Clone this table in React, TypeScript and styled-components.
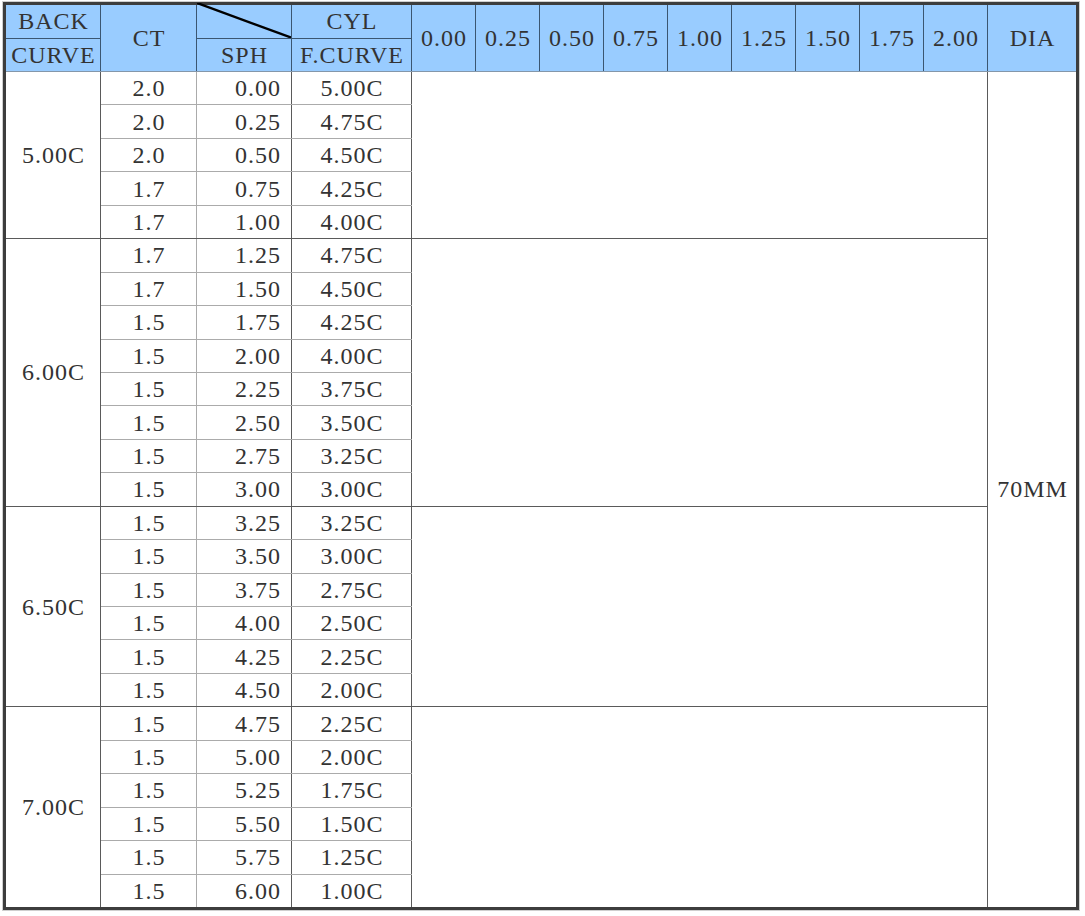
import React from "react";
import styled, { createGlobalStyle } from "styled-components";

const Global = createGlobalStyle`
  html, body { margin: 0; padding: 0; background: #ffffff; }
  body { font-family: "Liberation Serif", "Times New Roman", serif; color: #333; }
`;

const Frame = styled.div`
  display: inline-block;
  margin: 1px 0 0 2px;
  border: 1px solid #cfcfcf;
`;

const Table = styled.table`
  border-collapse: collapse;
  table-layout: fixed;
  border: 3px solid #3d3d3d;
  font-family: "Liberation Serif", "Times New Roman", serif;
  font-size: 24px;
  letter-spacing: 1px;
  color: #333;
  width: 1076px;
`;

const HeadCell = styled.th<{ $split?: boolean; $last?: boolean }>`
  background: #99ccff;
  font-weight: normal;
  padding: 0 0 0 1px;
  height: 32.5px;
  line-height: 26px;
  text-align: center;
  white-space: nowrap;
  border-right: ${(p) => (p.$last ? "none" : "1px solid #3b5671")};
  border-bottom: 1px solid ${(p) => (p.$split ? "#3b5671" : "#8497aa")};
  border-top: none;
  border-left: none;
  position: relative;
`;

const DiagonalSvg = styled.svg`
  position: absolute;
  left: 0;
  top: -2px;
  width: 100%;
  height: calc(100% + 2px);
  display: block;
`;

const Cell = styled.td<{
  $align?: "left" | "center" | "right";
  $right?: "dark" | "light" | "none";
  $bottom?: "dark" | "light" | "none";
}>`
  padding: 0 ${(p) => (p.$align === "right" ? "10px" : "0")} 0 ${(p) => (p.$align === "right" ? "0" : "1px")};
  height: 32.44px;
  line-height: 26px;
  text-align: ${(p) => p.$align ?? "center"};
  vertical-align: middle;
  white-space: nowrap;
  background: #ffffff;
  border-top: none;
  border-left: none;
  border-right: ${(p) =>
    p.$right === "none" ? "none" : p.$right === "light" ? "1px solid #ababab" : "1px solid #5a5a5a"};
  border-bottom: ${(p) =>
    p.$bottom === "none" ? "none" : p.$bottom === "light" ? "1px solid #ababab" : "1px solid #5a5a5a"};
`;

type Row = { ct: string; sph: string; fc: string };
type Group = { curve: string; rows: Row[] };

const groups: Group[] = [
  {
    curve: "5.00C",
    rows: [
      { ct: "2.0", sph: "0.00", fc: "5.00C" },
      { ct: "2.0", sph: "0.25", fc: "4.75C" },
      { ct: "2.0", sph: "0.50", fc: "4.50C" },
      { ct: "1.7", sph: "0.75", fc: "4.25C" },
      { ct: "1.7", sph: "1.00", fc: "4.00C" },
    ],
  },
  {
    curve: "6.00C",
    rows: [
      { ct: "1.7", sph: "1.25", fc: "4.75C" },
      { ct: "1.7", sph: "1.50", fc: "4.50C" },
      { ct: "1.5", sph: "1.75", fc: "4.25C" },
      { ct: "1.5", sph: "2.00", fc: "4.00C" },
      { ct: "1.5", sph: "2.25", fc: "3.75C" },
      { ct: "1.5", sph: "2.50", fc: "3.50C" },
      { ct: "1.5", sph: "2.75", fc: "3.25C" },
      { ct: "1.5", sph: "3.00", fc: "3.00C" },
    ],
  },
  {
    curve: "6.50C",
    rows: [
      { ct: "1.5", sph: "3.25", fc: "3.25C" },
      { ct: "1.5", sph: "3.50", fc: "3.00C" },
      { ct: "1.5", sph: "3.75", fc: "2.75C" },
      { ct: "1.5", sph: "4.00", fc: "2.50C" },
      { ct: "1.5", sph: "4.25", fc: "2.25C" },
      { ct: "1.5", sph: "4.50", fc: "2.00C" },
    ],
  },
  {
    curve: "7.00C",
    rows: [
      { ct: "1.5", sph: "4.75", fc: "2.25C" },
      { ct: "1.5", sph: "5.00", fc: "2.00C" },
      { ct: "1.5", sph: "5.25", fc: "1.75C" },
      { ct: "1.5", sph: "5.50", fc: "1.50C" },
      { ct: "1.5", sph: "5.75", fc: "1.25C" },
      { ct: "1.5", sph: "6.00", fc: "1.00C" },
    ],
  },
];

const cyls = ["0.00", "0.25", "0.50", "0.75", "1.00", "1.25", "1.50", "1.75", "2.00"];
const totalRows = groups.reduce((n, g) => n + g.rows.length, 0);

export default function App() {
  return (
    <>
      <Global />
      <Frame>
        <Table>
          <colgroup>
            <col style={{ width: 96 }} />
            <col style={{ width: 96 }} />
            <col style={{ width: 95 }} />
            <col style={{ width: 120 }} />
            {cyls.map((c) => (
              <col key={c} style={{ width: 64 }} />
            ))}
            <col style={{ width: 90 }} />
          </colgroup>
          <thead>
            <tr>
              <HeadCell $split>BACK</HeadCell>
              <HeadCell rowSpan={2}>CT</HeadCell>
              <HeadCell $split>
                <DiagonalSvg viewBox="0 0 100 100" preserveAspectRatio="none">
                  <line x1="0" y1="0" x2="100" y2="100" stroke="#000" strokeWidth="2.4" vectorEffect="non-scaling-stroke" />
                </DiagonalSvg>
                &nbsp;
              </HeadCell>
              <HeadCell $split>CYL</HeadCell>
              {cyls.map((c) => (
                <HeadCell key={c} rowSpan={2}>
                  {c}
                </HeadCell>
              ))}
              <HeadCell rowSpan={2} $last>
                DIA
              </HeadCell>
            </tr>
            <tr>
              <HeadCell>CURVE</HeadCell>
              <HeadCell>SPH</HeadCell>
              <HeadCell>F.CURVE</HeadCell>
            </tr>
          </thead>
          <tbody>
            {groups.map((g, gi) =>
              g.rows.map((r, ri) => {
                const lastInGroup = ri === g.rows.length - 1;
                const lastGroup = gi === groups.length - 1;
                const rowBottom = lastInGroup ? (lastGroup ? "none" : "dark") : "light";
                return (
                  <tr key={`${gi}-${ri}`}>
                    {ri === 0 && (
                      <Cell rowSpan={g.rows.length} $bottom={lastGroup ? "none" : "dark"}>
                        {g.curve}
                      </Cell>
                    )}
                    <Cell $right="light" $bottom={rowBottom}>
                      {r.ct}
                    </Cell>
                    <Cell $align="right" $bottom={rowBottom}>
                      {r.sph}
                    </Cell>
                    <Cell $bottom={rowBottom}>{r.fc}</Cell>
                    {ri === 0 && (
                      <Cell colSpan={9} rowSpan={g.rows.length} $bottom={lastGroup ? "none" : "dark"} />
                    )}
                    {gi === 0 && ri === 0 && (
                      <Cell rowSpan={totalRows} $right="none" $bottom="none">
                        70MM
                      </Cell>
                    )}
                  </tr>
                );
              })
            )}
          </tbody>
        </Table>
      </Frame>
    </>
  );
}
